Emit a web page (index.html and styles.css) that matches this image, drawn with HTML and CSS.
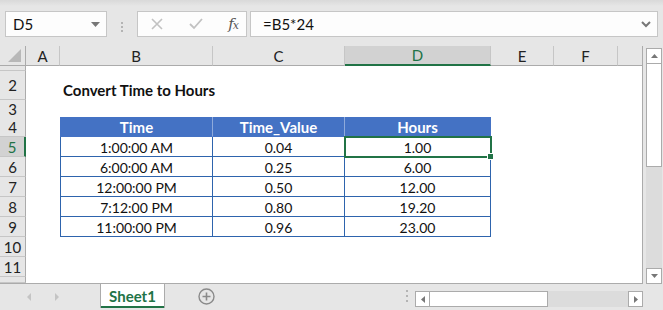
FILE: index.html
```html
<!DOCTYPE html>
<html lang="en">
<head>
    <meta charset="UTF-8">
    <title>Convert Time to Hours</title>
    <link rel="stylesheet" href="styles.css">
</head>
<body>
    <div class="app">
        <div class="formula-bar">
            <div class="name-box">
                <span>D5</span>
                <svg class="caret" width="9" height="5" viewBox="0 0 9 5"><polygon points="0,0 9,0 4.5,5" fill="#777"/></svg>
            </div>
            <div class="grip"><i></i><i></i><i></i></div>
            <div class="fx-buttons">
                <svg width="12" height="12" viewBox="0 0 12 12"><path d="M1 1 L11 11 M11 1 L1 11" stroke="#c2c2c2" stroke-width="1.6"/></svg>
                <svg width="14" height="12" viewBox="0 0 14 12"><path d="M1 6 L5 10 L13 1" stroke="#c2c2c2" stroke-width="1.8" fill="none"/></svg>
                <span class="fx">f<span>x</span></span>
            </div>
            <div class="formula-input">
                <span>=B5*24</span>
                <svg width="10" height="7" viewBox="0 0 10 7"><path d="M1 1 L5 5 L9 1" stroke="#777" stroke-width="2" fill="none"/></svg>
            </div>
        </div>

        <div class="workspace">
            <div class="sheet">
                <div class="row h20">
                    <div class="ch corner">
                        <svg width="13" height="13" viewBox="0 0 13 13"><polygon points="13,0 13,13 0,13" fill="#b8b8b8"/></svg>
                    </div>
                    <div class="ch">A</div>
                    <div class="ch">B</div>
                    <div class="ch">C</div>
                    <div class="ch sel">D</div>
                    <div class="ch">E</div>
                    <div class="ch">F</div>
                    <div class="ch last"></div>
                </div>
                <div class="row h5"><div class="rh"></div></div>
                <div class="row h29">
                    <div class="rh">2</div>
                    <div></div>
                    <div class="title">Convert Time to Hours</div>
                </div>
                <div class="row h17"><div class="rh">3</div></div>
                <div class="row h20">
                    <div class="rh">4</div>
                    <div></div>
                    <div class="th first">Time</div>
                    <div class="th">Time_Value</div>
                    <div class="th end">Hours</div>
                </div>
                <div class="row h20">
                    <div class="rh sel">5</div>
                    <div></div>
                    <div class="td first">1:00:00 AM</div>
                    <div class="td">0.04</div>
                    <div class="td active">1.00</div>
                </div>
                <div class="row h20">
                    <div class="rh">6</div>
                    <div></div>
                    <div class="td first">6:00:00 AM</div>
                    <div class="td">0.25</div>
                    <div class="td">6.00</div>
                </div>
                <div class="row h20">
                    <div class="rh">7</div>
                    <div></div>
                    <div class="td first">12:00:00 PM</div>
                    <div class="td">0.50</div>
                    <div class="td">12.00</div>
                </div>
                <div class="row h20">
                    <div class="rh">8</div>
                    <div></div>
                    <div class="td first">7:12:00 PM</div>
                    <div class="td">0.80</div>
                    <div class="td">19.20</div>
                </div>
                <div class="row h20">
                    <div class="rh">9</div>
                    <div></div>
                    <div class="td first">11:00:00 PM</div>
                    <div class="td">0.96</div>
                    <div class="td">23.00</div>
                </div>
                <div class="row h20"><div class="rh">10</div></div>
                <div class="row h20"><div class="rh">11</div></div>
                <div class="row h7"><div class="rh"></div></div>
            </div>

            <div class="vscroll">
                <div class="sb-btn">
                    <svg width="7" height="4" viewBox="0 0 7 4"><polygon points="0,4 7,4 3.5,0" fill="#777"/></svg>
                </div>
                <div class="v-thumb"></div>
                <div class="v-track"></div>
                <div class="sb-btn">
                    <svg width="7" height="4" viewBox="0 0 7 4"><polygon points="0,0 7,0 3.5,4" fill="#777"/></svg>
                </div>
            </div>
        </div>

        <div class="tab-bar">
            <div class="tab-nav">
                <svg width="4" height="8" viewBox="0 0 4 8"><polygon points="4,0 4,8 0,4" fill="#c4c4c4"/></svg>
                <svg width="4" height="8" viewBox="0 0 4 8"><polygon points="0,0 0,8 4,4" fill="#c4c4c4"/></svg>
            </div>
            <div class="tab">Sheet1</div>
            <div class="add-sheet">
                <svg width="17" height="17" viewBox="0 0 17 17">
                    <circle cx="8.5" cy="8.5" r="7.5" fill="none" stroke="#8a8a8a" stroke-width="1.4"/>
                    <path d="M8.5 4.5 V12.5 M4.5 8.5 H12.5" stroke="#8a8a8a" stroke-width="1.6"/>
                </svg>
            </div>
            <div class="grip small"><i></i><i></i><i></i></div>
            <div class="hscroll">
                <div class="sb-btn">
                    <svg width="4" height="7" viewBox="0 0 4 7"><polygon points="4,0 4,7 0,3.5" fill="#777"/></svg>
                </div>
                <div class="h-thumb"></div>
                <div class="h-track"></div>
                <div class="sb-btn">
                    <svg width="4" height="7" viewBox="0 0 4 7"><polygon points="0,0 0,7 4,3.5" fill="#777"/></svg>
                </div>
            </div>
        </div>
    </div>
</body>
</html>
```

FILE: styles.css
```css
body {
    margin: 0;
    font-family: Lato, "Liberation Sans", sans-serif;
    background-color: #e6e6e6;
    color: #111;
}
.app {
    width: 663px;
    height: 310px;
    overflow: hidden;
}

/* formula bar */
.formula-bar {
    display: flex;
    height: 46px;
    padding: 11px 5px 0 5px;
    box-sizing: border-box;
    background: linear-gradient(#d9d9d9, #e6e6e6 6px);
}
.name-box, .fx-buttons, .formula-input {
    height: 26px;
    box-sizing: border-box;
    background-color: #fdfdfd;
    border: 1px solid #c6c6c6;
    display: flex;
    align-items: center;
}
.name-box {
    width: 102px;
    padding: 0 6px 0 7px;
    justify-content: space-between;
    font-size: 15px;
}
.grip {
    width: 30px;
    display: flex;
    flex-direction: column;
    align-items: center;
    justify-content: center;
    gap: 2px;
    padding-bottom: 4px;
}
.grip i {
    width: 2px;
    height: 2px;
    background-color: #b4b4b4;
}
.fx-buttons {
    width: 110px;
    padding: 0 8px 0 13px;
    justify-content: space-between;
}
.fx {
    font-family: "DejaVu Serif", serif;
    font-style: italic;
    font-size: 15px;
    color: #555;
    letter-spacing: -1px;
}
.fx span {
    font-size: 11px;
}
.formula-input {
    flex: 1;
    margin-left: 3px;
    padding: 0 6px 0 12px;
    justify-content: space-between;
    font-size: 15px;
}

/* worksheet */
.workspace {
    display: flex;
    height: 238px;
}
.sheet {
    width: 643px;
    box-sizing: border-box;
    border-right: 1px solid #ababab;
    border-bottom: 1px solid #ababab;
    background-color: #fff;
    font-size: 14px;
}
.row {
    display: grid;
    grid-template-columns: 26px 34px 153px 132px 146px 63px 64px 24px;
}
.h20 { height: 20px; }
.h5 { height: 5px; }
.h29 { height: 29px; }
.h17 { height: 17px; }
.h7 { height: 6px; }

.ch {
    background-color: #e6e6e6;
    border-right: 1px solid #c6c6c6;
    border-bottom: 1px solid #ababab;
    display: flex;
    align-items: center;
    justify-content: center;
    color: #222;
    font-size: 15px;
}
.ch.corner {
    justify-content: flex-end;
    align-items: flex-end;
    padding: 0 4px 3px 0;
    border-right-color: #ababab;
}
.ch.last {
    border-right: none;
}
.ch.sel {
    background-color: #d2d2d2;
    color: #217346;
    border-bottom: 2px solid #217346;
}
.rh {
    background-color: #e6e6e6;
    border-right: 1px solid #ababab;
    border-bottom: 1px solid #c6c6c6;
    display: flex;
    align-items: center;
    justify-content: center;
    color: #222;
    font-size: 15px;
    box-sizing: border-box;
}
.rh.sel {
    background-color: #d2d2d2;
    color: #217346;
    border-right: 2px solid #217346;
}
.title {
    grid-column: 3 / 6;
    font-weight: bold;
    font-size: 15px;
    display: flex;
    align-items: flex-end;
    padding: 0 0 1px 3px;
}
.th, .td {
    display: flex;
    align-items: center;
    justify-content: center;
    box-sizing: border-box;
    border-right: 1px solid #2e64ad;
    border-bottom: 1px solid #2e64ad;
    padding-top: 1px;
}
.th {
    background-color: #4472c4;
    color: #fff;
    font-weight: bold;
    font-size: 15px;
    border-right-color: #8eaadb;
    border-bottom-color: #4472c4;
}
.th.end {
    border-right-color: #4472c4;
}
.first {
    border-left: 1px solid #2e64ad;
}
.th.first {
    border-left-color: #4472c4;
}
.td.active {
    position: relative;
    outline: 2px solid #217346;
    outline-offset: -1px;
}
.td.active::after {
    content: "";
    position: absolute;
    right: -4px;
    bottom: -4px;
    width: 5px;
    height: 5px;
    background-color: #217346;
    border: 1px solid #fff;
}

/* scroll bars */
.vscroll {
    width: 17px;
    margin: 2px 0 0 3px;
    display: flex;
    flex-direction: column;
}
.sb-btn {
    width: 16px;
    height: 16px;
    box-sizing: border-box;
    background-color: #fff;
    border: 1px solid #ababab;
    display: flex;
    align-items: center;
    justify-content: center;
}
.v-thumb {
    height: 103px;
    background-color: #fff;
    border: 1px solid #ababab;
    border-top: none;
    width: 16px;
    box-sizing: border-box;
}
.v-track {
    flex: 1;
    width: 16px;
    background-color: #dcdcdc;
}

/* sheet tabs */
.tab-bar {
    display: flex;
    height: 26px;
    align-items: flex-start;
}
.tab-nav {
    width: 100px;
    display: flex;
    gap: 24px;
    padding: 9px 0 0 27px;
    box-sizing: border-box;
}
.tab {
    width: 65px;
    height: 24px;
    box-sizing: border-box;
    background-color: #fff;
    border-left: 1px solid #ababab;
    border-right: 1px solid #ababab;
    display: flex;
    align-items: center;
    justify-content: center;
    font-weight: bold;
    font-size: 15px;
    color: #217346;
    position: relative;
}
.tab::after {
    content: "";
    position: absolute;
    left: 0;
    right: 0;
    bottom: 0;
    height: 2px;
    background-color: #217346;
}
.add-sheet {
    flex: 1;
    padding: 4px 0 0 33px;
    box-sizing: border-box;
}
.grip.small {
    width: 16px;
    padding: 6px 0 0;
    gap: 3px;
}
.hscroll {
    display: flex;
    margin: 7px 20px 0 0;
    width: 228px;
    height: 16px;
}
.hscroll .sb-btn {
    width: 15px;
    height: 16px;
}
.h-thumb {
    width: 118px;
    background-color: #fff;
    border: 1px solid #ababab;
    border-left: none;
    box-sizing: border-box;
}
.h-track {
    flex: 1;
    background-color: #dcdcdc;
}
```
